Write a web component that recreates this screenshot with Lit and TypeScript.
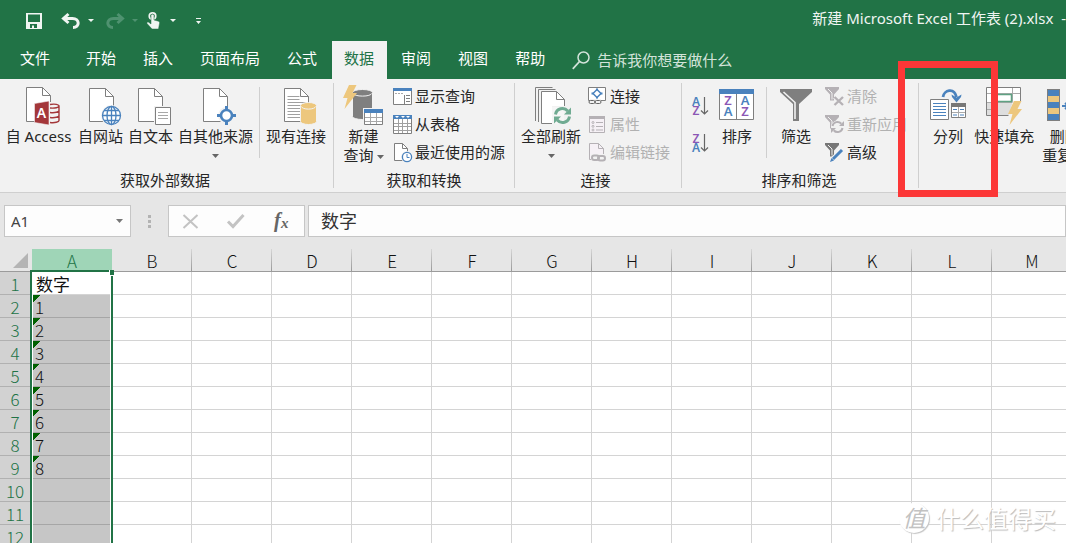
import { LitElement, html, svg, css, nothing } from "lit";
import { customElement, state } from "lit/decorators.js";
import { classMap } from "lit/directives/class-map.js";

const ROW_HEAD = 32;
const COL_WIDTH = 80;
const ROW_HEIGHT = 23;
const SHEET_TOP = 272;

const BLUE = "#4a82bd";
const GREY = "#7f7f7f";
const SAND = "#edc77d";
const PURPLE = "#8b57b5";
const MUTED = "#b5b1b5";

const page = (x: number, y: number, w = 24, h = 33, fold = 8, color = GREY, fill = "#fff") => svg`
  <path d="M${x} ${y}h${w - fold}l${fold} ${fold}v${h - fold}h${-w}z" fill=${fill} stroke=${color}/>
  <path d="M${x + w - fold} ${y}v${fold}h${fold}" fill="none" stroke=${color}/>`;

const cylinder = (x: number, y: number, w: number, h: number, color: string) => svg`
  <path d="M${x} ${y + 3}a${w / 2} 3 0 0 1 ${w} 0v${h - 6}a${w / 2} 3 0 0 1 ${-w} 0z" fill=${color} stroke="#f2f2f2" stroke-width="1"/>
  <path d="M${x + 1} ${y + 4}a${w / 2 - 1} 2.6 0 0 0 ${w - 2} 0" fill="none" stroke="#f2f2f2"/>`;

const bolt = (x: number, y: number) => svg`
  <path transform="translate(${x} ${y})" d="M6 0h7.500L9.500 8h4.500L1.500 24L4.500 13H0z" fill=${SAND}/>`;

const letter = (ch: string, x: number, y: number, color: string, size = 12) => svg`
  <text x=${x} y=${y} fill=${color} font-size=${size} font-weight="600" text-anchor="middle">${ch}</text>`;

const funnel = (color: string) => svg`
  <path d="M0 0h14v2L9 7.500v6H5v-6L0 2z" fill=${color}/><path d="M3 2l4 4v6.500" fill="none" stroke="#f2f2f2"/>`;

const cycle = (cx: number, cy: number, r: number, color: string, w: number) => svg`
  <g transform="translate(${cx} ${cy})" fill="none" stroke=${color} stroke-width=${w}>
    <path d="M${-r} -1A${r} ${r} 0 0 1 ${r * 0.75} ${-r * 0.65}"/>
    <path d="M${r} 1A${r} ${r} 0 0 1 ${-r * 0.75} ${r * 0.65}"/>
    <path d="M${r + 1.5} ${-r - 1}v${r}h${-r}z" fill=${color} stroke="none"/>
    <path d="M${-r - 1.5} ${r + 1}v${-r}h${r}z" fill=${color} stroke="none"/>
  </g>`;

const icons: Record<string, { w: number; art: unknown }> = {
  access: {
    w: 45,
    art: svg`${page(10.5, 0.5, 24, 34)}
      <path d="M32 15h6c8 0 8 4 6 5v14c0 3-5 4-12 3z" fill="#f2f2f2"/>
      <path d="M18.500 16.500L33 14v24l-14.500-2.500z" fill="#a4373a" stroke="#f2f2f2" stroke-width=".6"/>
      <path d="M34 17.500c5-1 9 0 9 1.500s-4 2.500-9 2M34 25.500c5 .6 9-.5 9-2v-4.500M34 30.500c5 .6 9-.5 9-2v-5M34 35.500c5 .6 9-.5 9-2v-5" fill="none" stroke="#a4373a" stroke-width="1.400"/>
      ${letter("A", 25.5, 31, "#fff", 14)}`,
  },
  web: {
    w: 45,
    art: svg`${page(11.5, 1.5)}
      <circle cx="33.500" cy="28.500" r="10.500" fill="#f2f2f2"/>
      <g fill="#fff" stroke=${BLUE} stroke-width="1.300"><circle cx="33.500" cy="28.500" r="9"/>
      <ellipse cx="33.500" cy="28.500" rx="4.500" ry="9"/>
      <path d="M33.500 19.500v18M24.500 28.500h18M26 23.500h15M26 33.500h15" fill="none"/></g>`,
  },
  text: {
    w: 45,
    art: svg`${page(10.5, 1.5)}
      <path d="M26 19h18v20H26z" fill="#f2f2f2"/>
      <path d="M27.500 20.500h15v17h-15z" fill="#fff" stroke=${GREY}/>
      <path d="M30 25.500h10M30 28.500h10M30 31.500h10" stroke="#a8a8a8"/>`,
  },
  other: {
    w: 45,
    art: svg`${page(10.5, 1.5)}
      <circle cx="33.500" cy="28.500" r="8.500" fill="#f2f2f2"/>
      <circle cx="33.500" cy="28.500" r="5.500" fill="#fff" stroke=${BLUE} stroke-width="2.600"/>
      <path d="M33.500 19v4M33.500 34v4M24 28.500h4M39 28.500h4" stroke=${BLUE} stroke-width="3"/>`,
  },
  existing: {
    w: 60,
    art: svg`${page(18.5, 1.5)}
      <path d="M21.500 9.500h12M21.500 12.500h12M21.500 15.500h18M21.500 18.500h18M21.500 21.500h13M21.500 24.500h13M21.500 27.500h13M21.500 30.500h13" stroke="#a0a0a0"/>
      ${cylinder(34.5, 15.5, 16, 22, SAND)}`,
  },
  query: {
    w: 41,
    art: svg`${cylinder(9.500, 2.500, 20, 30, GREY)}${bolt(0, -2)}
      <path d="M20 21h21v18H20z" fill="#f2f2f2"/><path d="M21.500 24.500h18v13h-18z" fill="#fff" stroke=${GREY}/>
      <path d="M21 22h19v4H21z" fill=${BLUE}/><path d="M27.500 26v11M33.500 26v11M22 30.500h17M22 34.500h17" stroke="#a8a8a8"/>`,
  },
  show: {
    w: 20,
    art: svg`<path d="M.5 1.500h18v16H.5z" fill="#fff" stroke=${GREY}/><path d="M0 1h19v3H0z" fill=${BLUE}/>
      <path d="M2 6.500h8" stroke="#aaa" stroke-dasharray="2 1"/><path d="M11.500 8v9M13 8.500h4M13 11.500h4M13 14.500h4" stroke=${GREY}/>`,
  },
  table: {
    w: 20,
    art: svg`<path d="M.5 1.500h18v17H.5z" fill="#fff" stroke=${GREY}/><path d="M0 0h19v4H0z" fill=${BLUE}/>
      <path d="M2 1h4l-2 2zM8 1h4l-2 2zM13 1h4l-2 2z" fill="#fff"/>
      <path d="M5.500 4v14M9.500 4v14M14.500 4v14M1 8.500h17M1 11.500h17M1 15.500h17" stroke="#a0a0a0"/>`,
  },
  recent: {
    w: 20,
    art: svg`${page(1.500, 0.500, 13, 17, 5)}<circle cx="14" cy="14" r="6" fill="#f2f2f2"/>
      <circle cx="14" cy="14" r="4.600" fill="#fff" stroke=${BLUE} stroke-width="1.300"/><path d="M14 11v3.500h2.500" fill="none" stroke=${BLUE}/>`,
  },
  refresh: {
    w: 60,
    art: svg`<path d="M14.500 34V.5h17" fill="none" stroke=${GREY}/><path d="M17.500 35V2.500h17" fill="none" stroke=${GREY}/>
      ${page(20.5, 4.5, 23, 32)}<path d="M31 19h21v20H31z" fill="#f2f2f2"/><path d="M31 20h12v17H31z" fill="#f6f6f6"/>
      ${cycle(41.5, 28.5, 7, "#70ab92", 3)}`,
  },
  connect: {
    w: 20,
    art: svg`<path d="M.5.500h17v13H.5z" fill="#fff" stroke=${GREY}/>
      <path d="M9 2.500l4 4-4 4-4-4z" fill="none" stroke=${BLUE} stroke-width="1.500"/>
      <path d="M8 1.500h2v2H8zM8 9.500h2v2H8zM3.500 5.500h2v2h-2zM12.500 5.500h2v2h-2z" fill=${BLUE}/>
      <path d="M2 12h11v4H2z" fill="#f2f2f2"/><rect x="1" y="13.500" width="6" height="3" rx="1.500" fill="none" stroke="#666"/><rect x="7" y="13.500" width="6" height="3" rx="1.500" fill="none" stroke="#666"/>`,
  },
  props: {
    w: 20,
    art: svg`<path d="M1.500 1.500h15v16h-15z" fill="#f6f1f6" stroke=${MUTED}/><path d="M1 1h16v3H1z" fill=${MUTED}/>
      <path d="M8 7.500h7M8 11.500h7M8 15h7" stroke=${MUTED}/><g fill="none" stroke=${MUTED}><circle cx="5" cy="7.500" r="1"/><circle cx="5" cy="11.300" r="1"/><circle cx="5" cy="15" r="1"/></g>`,
  },
  links: {
    w: 20,
    art: svg`${page(1.500, 0.500, 14, 16, 5, MUTED, "#f6f1f6")}
      <path d="M3 11h16v8H3z" fill="#f2f2f2"/><g fill="none" stroke=${MUTED} stroke-width="2"><rect x="4" y="12.500" width="7" height="4.500" rx="2.200"/><rect x="10" y="13" width="7" height="4.500" rx="2.200"/></g>`,
  },
  az: {
    w: 20,
    art: svg`${letter("A", 5, 9.500, BLUE)}${letter("Z", 5, 19, PURPLE)}
      <path d="M13.500 1v17M10 14.500l3.500 3.500 3.500-3.500" fill="none" stroke="#666" stroke-width="1.200"/>`,
  },
  za: {
    w: 20,
    art: svg`${letter("Z", 5, 9.500, PURPLE)}${letter("A", 5, 19, BLUE)}
      <path d="M13.500 1v17M10 14.500l3.500 3.500 3.500-3.500" fill="none" stroke="#666" stroke-width="1.200"/>`,
  },
  sort: {
    w: 36,
    art: svg`<path d="M.5 2.500h34v30H.5z" fill="#fff" stroke=${GREY}/><path d="M0 2h35v5H0z" fill=${BLUE}/><path d="M17.500 7v25" stroke=${GREY}/>
      ${letter("Z", 9, 18, PURPLE, 13)}${letter("A", 9, 29, BLUE, 13)}${letter("A", 26, 18, BLUE, 13)}${letter("Z", 26, 29, PURPLE, 13)}`,
  },
  filter: {
    w: 32,
    art: svg`<path d="M0 2h32v3L19 17v17h-6V17L0 5z" fill=${GREY}/><path d="M3.500 5L15 15.500V32" fill="none" stroke="#f2f2f2" stroke-width="1.600"/>`,
  },
  clear: {
    w: 20,
    art: svg`${funnel(MUTED)}<path d="M9.500 10l9 8M18.500 10l-9 8" stroke="#f2f2f2" stroke-width="4"/><path d="M9.500 10l8.500 8M18 10l-8.500 8" stroke=${MUTED} stroke-width="2.400"/>`,
  },
  reapply: {
    w: 20,
    art: svg`${funnel(MUTED)}<circle cx="12.500" cy="12" r="6.500" fill="#f2f2f2"/>${cycle(12.500, 12, 5, MUTED, 2)}`,
  },
  advanced: {
    w: 20,
    art: svg`${funnel("#777")}<path d="M18.500 5L6 18" stroke="#f2f2f2" stroke-width="5"/><path d="M17 7L8 16" stroke=${BLUE} stroke-width="3"/><path d="M5 19l1.500-4 2.500 2.500z" fill=${BLUE}/>`,
  },
  split: {
    w: 36,
    art: svg`<path d="M.500 12.500h18v20h-18z" fill="#fff" stroke=${GREY}/>
      <path d="M3 16.500h13M3 19.500h13M3 22.500h13M3 25.500h13M3 28.500h13" stroke=${BLUE}/>
      <path d="M21.500 16.500h14v14h-14z" fill="#fff" stroke=${GREY}/><path d="M21 16h15v4H21z" fill="#777"/>
      <path d="M28.500 20v10M22 25.500h13" stroke="#aaa"/><path d="M23 22.500h4M30 22.500h4M23 28h4M30 28h4" stroke=${BLUE}/>
      <path d="M13 10c1-7 11-10 13.500 0" fill="none" stroke=${BLUE} stroke-width="2.800"/><path d="M21.500 7.500l5 3 5-3-.5 2.500-4.500 5.500-4.500-5.500z" fill=${BLUE}/>`,
  },
  fill: {
    w: 36,
    art: svg`<path d="M.500.500h34v28H.5z" fill="#fff" stroke=${GREY}/><path d="M1 15h25v13H1z" fill="#dedede"/>
      <path d="M9.500 1v27M26.500 1v14M1 6.500h33M1 15.500h33M1 22.500h8" stroke="#aaa"/><path d="M9.500 7.500h16v7h-16z" fill="#fff" stroke="#5fa283" stroke-width="1.500"/>
      <path d="M27 14h10v16H22z" fill="#f2f2f2"/>${bolt(22, 14)}`,
  },
  dedupe: {
    w: 36,
    art: svg`<path d="M0 2h13v32H0z" fill=${GREY}/><path d="M1 3h11v30H1z" fill=${BLUE}/><path d="M1 9h11v6H1zM1 21h11v6H1z" fill=${SAND}/>
      <path d="M15 19h6M18 16l3.500 3-3.500 3" fill="none" stroke=${BLUE} stroke-width="2"/><path d="M23.500 8.500h12v20h-12z" fill="#fff" stroke=${GREY}/>`,
  },
};

const icon = (name: string, h = 20) =>
  html`<svg class="icon" width=${icons[name].w} height=${h} viewBox="0 0 ${icons[name].w} ${h}" aria-hidden="true">${icons[name].art}</svg>`;

const caret = () => html`<svg class="caret" width="7" height="4" viewBox="0 0 7 4" aria-hidden="true"><path d="M0 0h7L3.500 4z" fill="currentColor"/></svg>`;

@customElement("app-root")
export class AppRoot extends LitElement {
  @state() private cols = 13;
  @state() private rows = 12;

  private values = ["数字", "1", "2", "3", "4", "5", "6", "7", "8"];
  private tabs = ["文件", "开始", "插入", "页面布局", "公式", "数据", "审阅", "视图", "帮助"];

  private measure = () => {
    this.cols = Math.min(26, Math.ceil((window.innerWidth - ROW_HEAD) / COL_WIDTH));
    this.rows = Math.max(9, Math.ceil((window.innerHeight - SHEET_TOP) / ROW_HEIGHT));
  };

  connectedCallback() {
    super.connectedCallback();
    this.measure();
    window.addEventListener("resize", this.measure);
  }

  disconnectedCallback() {
    window.removeEventListener("resize", this.measure);
    super.disconnectedCallback();
  }

  static styles = css`
    :host {
      display: flex;
      flex-direction: column;
      position: relative;
      height: 100vh;
      overflow: hidden;
      background: #fff;
      color: #262626;
      font: 15px/19px "Noto Sans", "Noto Sans CJK SC", sans-serif;
    }
    * { box-sizing: border-box; }
    button, input { font: inherit; color: inherit; border: 0; padding: 0; margin: 0; background: none; border-radius: 0; outline: 0; }
    svg { display: block; flex: none; overflow: visible; }
    button { white-space: nowrap; }

    .titlebar { display: flex; align-items: center; height: 41px; padding-left: 26px; background: #217346; color: #f0f5f2; }
    .quick { display: flex; align-items: center; gap: 8px; }
    .quick .drop { margin-right: 4px; }
    .quick .far { margin-left: 8px; }
    .quick .save { margin-right: 12px; }
    .quick .off { color: #4f9270; }
    .title { margin-left: auto; padding-bottom: 4px; white-space: pre; }

    .tabs { display: flex; align-items: stretch; gap: 2px; height: 38px; background: #217346; color: #fff; }
    .tab { padding: 0 13px 4px 12px; }
    .tab.file { padding: 0 22px 4px 20px; }
    .tab.active { background: #f2f2f2; color: #217346; }
    .tell { display: flex; align-items: center; gap: 7px; padding-left: 12px; color: #d3e3da; }
    .tell input { width: 160px; }
    .tell input::placeholder { color: #d3e3da; opacity: 1; }

    .ribbon { display: flex; height: 114px; padding: 4px 0; background: #f2f2f2; border-bottom: 1px solid #cfcfcf; overflow: hidden; }
    .group { display: flex; flex-direction: column; flex: none; justify-content: space-between; border-right: 1px solid #cfcfcf; height: 105px; }
    .group:last-child { border: 0; }
    .tools { display: flex; align-items: flex-start; }
    .caption { text-align: center; line-height: 15px; }
    .external { padding: 0 7px 0 4px; }
    .external .tools { gap: 5px; }
    .external .big:first-child { min-width: 69px; }
    .external .rule { margin: 4px 1px 0; }
    .transform { padding: 0 9px; }
    .transform .tools { gap: 9px; }
    .conns .tools { gap: 7px; }
    .conns { padding: 0 11px 0 6px; }
    .sorting { padding: 0 11px 0 9px; }
    .sorting .tools { gap: 8px; }
    .sorting .rule { margin: 4px 5px 0 3px; }
    .sorting .list { margin-left: 5px; }
    .data { padding: 0 11px; }
    .data .tools { gap: 8px; }
    .rule { width: 1px; height: 71px; background: #cfcfcf; }
    .big { display: flex; flex-direction: column; align-items: center; padding-top: 4px; }
    .big .icon { height: 40px; }
    .big .caret { margin-top: 8px; color: #666; }
    .line { display: flex; align-items: center; gap: 3px; }
    .line .caret { margin-top: 2px; }
    .list { display: flex; flex-direction: column; }
    .small { display: flex; align-items: center; gap: 2px; height: 28px; }
    .small span { padding-bottom: 2px; }
    .small[disabled] { color: #b1b1b1; }
    .order { display: flex; flex-direction: column; gap: 17px; padding-top: 13px; }

    .formula { display: flex; align-items: center; height: 56px; padding-left: 4px; background: #e6e6e6; }
    .box { display: flex; align-items: center; height: 32px; background: #fdfdfd; border: 1px solid #c6c6c6; }
    .name { width: 127px; padding: 0 7px 0 6px; color: #444; }
    .name input { flex: 1; min-width: 0; }
    .name button { color: #777; }
    .grip { margin: 0 17px; }
    .actions { width: 137px; justify-content: space-between; padding: 0 15px 0 13px; }
    .entry { flex: 1; margin-left: 3px; padding: 0 12px; font: 18px/26px "Noto Sans CJK SC", sans-serif; }
    .entry input { width: 100%; color: #333; padding-bottom: 2px; }

    .sheet { position: relative; flex: 1; overflow: hidden; font: 17px/20px "Noto Sans CJK SC", sans-serif; color: #111; }
    table { border-collapse: separate; border-spacing: 0; table-layout: fixed; width: max-content; }
    th, td { height: 23px; padding: 2px 0 0; font-weight: 300; line-height: 20px; border-bottom: 1px solid #d4d4d4; border-right: 1px solid #d4d4d4; white-space: nowrap; }
    col { width: 80px; }
    col.head { width: 32px; }
    thead th { background: #e6e6e6; border-bottom-color: #9b9b9b; border-right: 0; background-image: linear-gradient(#d6d6d6, #999); background-size: 1px 100%; background-position: right; background-repeat: no-repeat; }
    thead th.picked { background: #9fd5b7; color: #217346; }
    thead th.corner { background: #e6e6e6; padding: 3px 4px 2px 13px; }
    tbody th { background: #d2d2d2; color: #217346; border-bottom-color: #b1b1b1; border-right: 0; padding-right: 2px; }
    tbody td { text-align: left; }
    td.value { padding-left: 4px; font-weight: 400; }
    td.range { background: #c6c6c6; border-bottom-color: #a6a6a6; padding-left: 3px; font-weight: 300; }
    td.error { background-image: linear-gradient(135deg, #006100 50%, transparent 50%); background-size: 7px 7px; background-repeat: no-repeat; background-position: 1px 0; }
    .selection { position: absolute; left: 30px; top: 21px; width: 83px; bottom: -3px; border: 2px solid #217346; box-shadow: inset 0 0 0 1px #fff; pointer-events: none; }
    .handle { position: absolute; left: 109px; top: 21px; width: 5px; height: 6px; background: #217346; border-bottom: 1px solid #fff; border-left: 1px solid #fff; }

    .highlight { position: absolute; left: 898px; top: 61px; width: 100px; height: 136px; border: 7px solid #fc3737; pointer-events: none; }
    .watermark { position: absolute; right: 10px; bottom: 8px; display: flex; align-items: center; gap: 7px; font: 400 24px/34px "Noto Sans CJK SC", sans-serif; color: #fff; text-shadow: 1px 1px 1px #bbb; pointer-events: none; }
    .seal { width: 30px; height: 30px; border-radius: 50%; background: #fff; box-shadow: 1px 1px 1px #c4c4c4; font-size: 23px; line-height: 29px; text-align: center; font-style: italic; color: #c2c2c2; text-shadow: none; }
  `;

  private big(name: string, label: string, second?: string, menu = false) {
    return html`<button class="big">
      ${icon(name, 40)}
      <span>${label}</span>
      ${second ? html`<span class="line">${second}${menu ? caret() : nothing}</span>` : menu ? caret() : nothing}
    </button>`;
  }

  private small(name: string, label: string, disabled = false) {
    return html`<button class="small" ?disabled=${disabled}>${icon(name)}<span>${label}</span></button>`;
  }

  private renderQuick() {
    const drop = (cls: string) => html`<button class=${cls} aria-label="更多"><svg width="6" height="3" viewBox="0 0 6 3"><path d="M0 0h6L3 3z" fill="currentColor"/></svg></button>`;
    return html`<div class="quick">
      <button class="save" aria-label="保存"><svg width="16" height="16" viewBox="0 0 16 16"><path fill="currentColor" fill-rule="evenodd" d="M0 0h16v16H0zM2 1.500V9h12V1.500zM4 11v4h2v-2.500h2V15h3v-4z"/></svg></button>
      <button aria-label="撤消"><svg width="18" height="16" viewBox="0 0 18 16"><path d="M6.500 1L1.500 5.500l5 4.500M2 5.500h8.500c7.500 0 7.500 9 .5 9" fill="none" stroke="currentColor" stroke-width="3"/></svg></button>
      ${drop("drop")}
      <button class="off" aria-label="恢复"><svg width="18" height="16" viewBox="0 0 18 16"><path d="M11.500 1l5 4.500-5 4.500M16 5.500H7.500c-7.500 0-7.500 9-.5 9" fill="none" stroke="currentColor" stroke-width="3"/></svg></button>
      ${drop("off")}
      <button aria-label="触摸模式"><svg width="16" height="17" viewBox="0 0 16 17"><circle cx="6.500" cy="4" r="3.200" fill="none" stroke="currentColor" stroke-width="1.800"/><path d="M5 3.500c0-1.800 3-1.800 3 0V8l4.500 1.200c1.200.4 1.200 1.300 1 2.300L12.500 17H6L1 11.500c-.5-1 .8-2 2-1L5 12z" fill="currentColor" stroke="#217346" stroke-width=".5"/></svg></button>
      ${drop("drop")}
      <button class="far" aria-label="自定义快速访问工具栏"><svg width="6" height="6" viewBox="0 0 6 6"><path d="M0 0h5v1H0zM0 3h5L2.500 6z" fill="currentColor"/></svg></button>
    </div>`;
  }

  private renderSheet() {
    const cols = Array.from({ length: this.cols }, (_, i) => String.fromCharCode(65 + i));
    const rows = Array.from({ length: this.rows }, (_, i) => i);
    return html`<main class="sheet">
      <table>
        <colgroup><col class="head">${cols.map(() => html`<col>`)}</colgroup>
        <thead><tr>
          <th class="corner"><svg width="15" height="15" viewBox="0 0 15 15"><path d="M15 0v15H0z" fill="#b4b4b4"/></svg></th>
          ${cols.map((c, i) => html`<th scope="col" class=${classMap({ picked: i === 0 })}>${c}</th>`)}
        </tr></thead>
        <tbody>${rows.map((r) => html`<tr>
          <th scope="row">${r + 1}</th>
          ${cols.map((_, i) => i === 0
            ? html`<td class=${classMap({ value: r === 0, range: r > 0, error: r > 0 && r < this.values.length })}>${this.values[r] ?? ""}</td>`
            : html`<td></td>`)}
        </tr>`)}</tbody>
      </table>
      <div class="selection"></div>
      <div class="handle"></div>
    </main>`;
  }

  render() {
    return html`
      <header class="titlebar">${this.renderQuick()}<div class="title">新建 Microsoft Excel 工作表 (2).xlsx  -</div></header>
      <nav class="tabs">
        ${this.tabs.map((t) => html`<button class=${classMap({ tab: true, file: t === "文件", active: t === "数据" })}>${t}</button>`)}
        <label class="tell">
          <svg width="18" height="19" viewBox="0 0 18 19" aria-hidden="true"><circle cx="11.500" cy="6.500" r="5.500" fill="none" stroke="currentColor" stroke-width="1.500"/><path d="M7.500 10.500L.8 17.800" stroke="currentColor" stroke-width="1.800"/></svg>
          <input type="text" placeholder="告诉我你想要做什么" aria-label="告诉我你想要做什么">
        </label>
      </nav>
      <div class="ribbon">
        <section class="group external">
          <div class="tools">
            ${this.big("access", "自 Access")}${this.big("web", "自网站")}${this.big("text", "自文本")}${this.big("other", "自其他来源", undefined, true)}
            <div class="rule"></div>
            ${this.big("existing", "现有连接")}
          </div>
          <div class="caption">获取外部数据</div>
        </section>
        <section class="group transform">
          <div class="tools">
            ${this.big("query", "新建", "查询", true)}
            <div class="list">${this.small("show", "显示查询")}${this.small("table", "从表格")}${this.small("recent", "最近使用的源")}</div>
          </div>
          <div class="caption">获取和转换</div>
        </section>
        <section class="group conns">
          <div class="tools">
            ${this.big("refresh", "全部刷新", undefined, true)}
            <div class="list">${this.small("connect", "连接")}${this.small("props", "属性", true)}${this.small("links", "编辑链接", true)}</div>
          </div>
          <div class="caption">连接</div>
        </section>
        <section class="group sorting">
          <div class="tools">
            <div class="order"><button aria-label="升序">${icon("az")}</button><button aria-label="降序">${icon("za")}</button></div>
            ${this.big("sort", "排序")}
            <div class="rule"></div>
            ${this.big("filter", "筛选")}
            <div class="list">${this.small("clear", "清除", true)}${this.small("reapply", "重新应用", true)}${this.small("advanced", "高级")}</div>
          </div>
          <div class="caption">排序和筛选</div>
        </section>
        <section class="group data">
          <div class="tools">${this.big("split", "分列")}${this.big("fill", "快速填充")}${this.big("dedupe", "删除", "重复项")}</div>
        </section>
      </div>
      <div class="formula">
        <div class="box name"><input type="text" aria-label="名称框" .value=${"A1"}><button aria-label="名称列表">${caret()}</button></div>
        <svg class="grip" width="3" height="13" viewBox="0 0 3 13" aria-hidden="true"><path d="M0 0h3v3H0zM0 5h3v3H0zM0 10h3v3H0z" fill="#b3b3b3"/></svg>
        <div class="box actions">
          <button aria-label="取消"><svg width="17" height="15" viewBox="0 0 17 15"><path d="M1.500 1l14 13M15.500 1l-14 13" stroke="#c3c3c3" stroke-width="2"/></svg></button>
          <button aria-label="输入"><svg width="18" height="14" viewBox="0 0 18 14"><path d="M1 7.500l5 5L16.500 1" fill="none" stroke="#c3c3c3" stroke-width="3"/></svg></button>
          <button aria-label="插入函数"><svg width="17" height="20" viewBox="0 0 17 20" fill="#666" font-family="Liberation Serif, serif" font-style="italic" font-weight="700"><text x="2" y="16" font-size="20">f</text><text x="9" y="17" font-size="15">x</text></svg></button>
        </div>
        <div class="box entry"><input type="text" aria-label="编辑栏" .value=${"数字"}></div>
      </div>
      ${this.renderSheet()}
      <div class="highlight"></div>
      <div class="watermark"><span class="seal">值</span><span>什么值得买</span></div>
    `;
  }
}
